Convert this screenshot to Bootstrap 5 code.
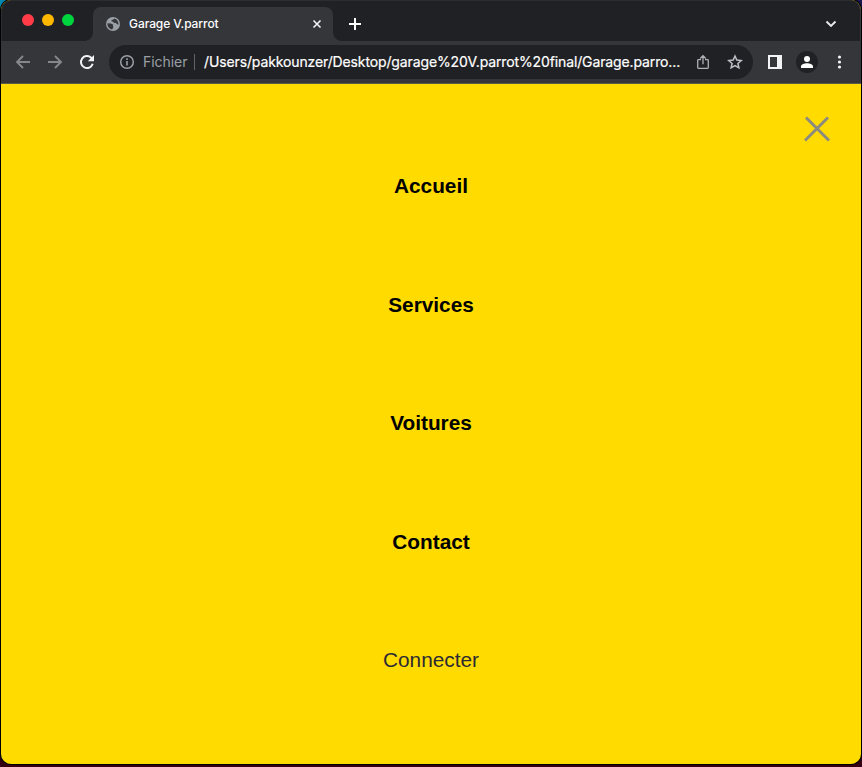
<!DOCTYPE html>
<html lang="fr">
<head>
<meta charset="utf-8">
<meta name="viewport" content="width=device-width, initial-scale=1">
<title>Garage V.parrot</title>
<link rel="stylesheet" href="https://cdn.jsdelivr.net/npm/bootstrap@5.3.0/dist/css/bootstrap.min.css">
<style>
html,body{height:100%}
body{background:linear-gradient(90deg,#078cb2 0,#086b91 12px,#15102f 40px,#1c1650 100%);font-family:Inter,Roboto,sans-serif}
.desk{height:767px;padding:0 1px 3px;background:linear-gradient(transparent 20px,#000 90px,#080004 735px,#350012 764px)}
.win{height:764px;border-radius:10px;background:#ffdb00;box-shadow:0 0 0 1px #000}
.tabstrip{height:41px;background:#202124;box-shadow:inset 1px 1px 0 #2c2d30,inset -1px 0 0 #3b3c3f;border-radius:10px 10px 0 0}
.lights{width:92px;padding:14px 0 0 21px;gap:8px}
.dot{width:12px;height:12px;border-radius:50%}
.dot-r{background:#ff3b47}.dot-y{background:#ffb700}.dot-g{background:#00d53f}
.tab{width:240px;height:34px;margin-top:7px;background:#35363a;border-radius:8px 8px 0 0;padding:0 11px 0 13px;color:#fff;font-size:12px}
.tab::before,.tab::after{content:"";position:absolute;bottom:0;width:8px;height:8px}
.tab::before{left:-8px;background:radial-gradient(circle at 0 0,transparent 7.5px,#35363a 8px)}
.tab::after{right:-8px;background:radial-gradient(circle at 100% 0,transparent 7.5px,#35363a 8px)}
.tab-title{letter-spacing:-.08px;margin-left:9px}
.newtab{margin:17px 0 0 15px}
.chev{margin:19px 24px 0 auto}
.toolbar{height:43px;background:#35363a;border-bottom:1px solid #5c5a4a;padding:0 14px 0 14px}
.navs{width:94px;gap:16px}
.omni{width:644px;height:34px;border-radius:17px;background:#202124;padding:0 10px;font-size:14px;color:#fff}
.scheme{color:#9aa0a6;margin-left:8px;width:44px;letter-spacing:-.05px}
.scheme,.url{padding-bottom:1px}
.bar{width:1px;height:16px;background:#5f6368;margin:0 9px 0 7px}
.url{width:482px;letter-spacing:-.125px;-webkit-text-stroke:.2px #fff}
.panel{margin-left:15px}
.avatar{width:22px;height:22px;border-radius:50%;background:#202124;margin-left:14px}
.page{height:680px;padding-top:86px;font-family:"Liberation Sans",Arial,sans-serif;font-size:20.8px;line-height:31.2px}
.closer{top:32px;right:31px}
.menu{gap:87.4px}
.menu a{color:#000;font-weight:700}
.menu a.login{color:#2c2a33;font-weight:400}
svg{display:block;flex:none}
</style>
<script src="https://cdn.jsdelivr.net/npm/bootstrap@5.3.0/dist/js/bootstrap.bundle.min.js"></script>
</head>
<body class="m-0 overflow-hidden">
<div class="desk">
<div class="win overflow-hidden">
<header>
<div class="tabstrip d-flex align-items-start">
<div class="lights d-flex"><span class="dot dot-r"></span><span class="dot dot-y"></span><span class="dot dot-g"></span></div>
<div class="tab position-relative d-flex align-items-center">
<svg width="14" height="14" viewBox="0 0 14 14"><circle cx="7" cy="7" r="7" fill="#9aa0a6"/><path d="M1.5 6.3 5 6.5 7.3 7.8 6.8 9 7.5 10 6.2 12.5C3 12 1.2 9.5 1.5 6.3ZM8.2 1.5 7.6 2.5 5.6 3 5.4 4.2 7.2 4.8 8 6 9.8 5.8 10.8 7 12.6 7.8C12.7 4.8 11 2.2 8.2 1.5Z" fill="#35363a"/></svg>
<span class="tab-title fw-medium me-auto text-nowrap">Garage V.parrot</span>
<svg width="10" height="10" viewBox="0 0 10 10" stroke="#f1f3f4" stroke-width="1.6"><path d="m1.5 1.5 7 7m0-7-7 7"/></svg>
</div>
<svg class="newtab" width="14" height="14" viewBox="0 0 14 14" stroke="#fff" stroke-width="2"><path d="M1 7h12M7 1v12"/></svg>
<svg class="chev" width="12" height="10" viewBox="0 0 12 10" fill="none" stroke="#e8eaed" stroke-width="1.9"><path d="m1.5 2.5 4.5 4.5 4.5-4.5"/></svg>
</div>
<div class="toolbar d-flex align-items-center">
<div class="navs d-flex">
<svg width="16" height="16" viewBox="0 0 16 16" fill="none" stroke="#85878a" stroke-width="1.9"><path d="M15 8H2.5M8 2 2 8l6 6"/></svg>
<svg width="16" height="16" viewBox="0 0 16 16" fill="none" stroke="#85878a" stroke-width="1.9"><path d="M1 8h12.5M8 2l6 6-6 6"/></svg>
<svg width="16" height="16" viewBox="0 0 16 16" fill="none" stroke="#f1f3f4" stroke-width="2"><path d="M13.7 9.8A6 6 0 1 1 12.2 3.8L13.5 5.1"/><path d="M15 1v6.2H8.8Z" fill="#f1f3f4" stroke="none"/></svg>
</div>
<div class="omni d-flex align-items-center">
<svg width="16" height="16" viewBox="0 0 16 16"><circle cx="8" cy="8" r="6.3" fill="none" stroke="#9aa0a6" stroke-width="1.5"/><path d="M7.2 7h1.6v4.5H7.2zM7.2 4.3h1.6v1.6H7.2z" fill="#9aa0a6"/></svg>
<span class="scheme text-nowrap">Fichier</span><span class="bar"></span>
<span class="url text-nowrap flex-shrink-0">/Users/pakkounzer/Desktop/garage%20V.parrot%20final/Garage.parro...</span>
<svg class="ms-auto" width="16" height="16" viewBox="0 0 16 16" fill="none" stroke="#aeb1b5" stroke-width="1.3"><path d="M6 5.7H3.5q-.8 0-.8.8v7q0 .8.8.8h9q.8 0 .8-.8v-7q0-.8-.8-.8H10M8 10.3V2M5.2 4.5 8 1.7l2.8 2.8"/></svg>
<svg class="ms-3" width="16" height="16" viewBox="0 0 16 16" fill="none" stroke="#bdc1c6" stroke-width="1.5"><path d="m8 2 1.8 4.1 4.4.4-3.3 2.9 1 4.4L8 11.5l-3.9 2.3 1-4.4-3.3-2.9 4.4-.4Z"/></svg>
</div>
<svg class="panel" width="14" height="14" viewBox="0 0 14 14"><path fill="#f1f3f4" fill-rule="evenodd" d="M0 0h14v14H0ZM2 2v10h7V2Z"/></svg>
<div class="avatar d-flex align-items-center justify-content-center"><svg width="14" height="14" viewBox="0 0 14 14" fill="#fff"><circle cx="7" cy="4" r="3"/><path d="M1 13v-1.5C1 9.3 4.5 8.2 7 8.2s6 1.1 6 3.3V13Z"/></svg></div>
<svg class="ms-auto" width="15" height="16" viewBox="0 0 15 16" fill="#f1f3f4"><circle cx="7.5" cy="3" r="1.6"/><circle cx="7.5" cy="8" r="1.6"/><circle cx="7.5" cy="13" r="1.6"/></svg>
</div>
</header>
<main class="page position-relative">
<svg class="closer position-absolute" width="26" height="26" viewBox="0 0 26 26" stroke="#8b8b80" stroke-width="3"><path d="m2 1.5 23 23M24 1.5l-23 23"/></svg>
<nav class="menu d-flex flex-column align-items-center">
<a class="text-decoration-none" href="#">Accueil</a>
<a class="text-decoration-none" href="#">Services</a>
<a class="text-decoration-none" href="#">Voitures</a>
<a class="text-decoration-none" href="#">Contact</a>
<a class="login text-decoration-none" href="#">Connecter</a>
</nav>
</main>
</div>
</div>
</body>
</html>
